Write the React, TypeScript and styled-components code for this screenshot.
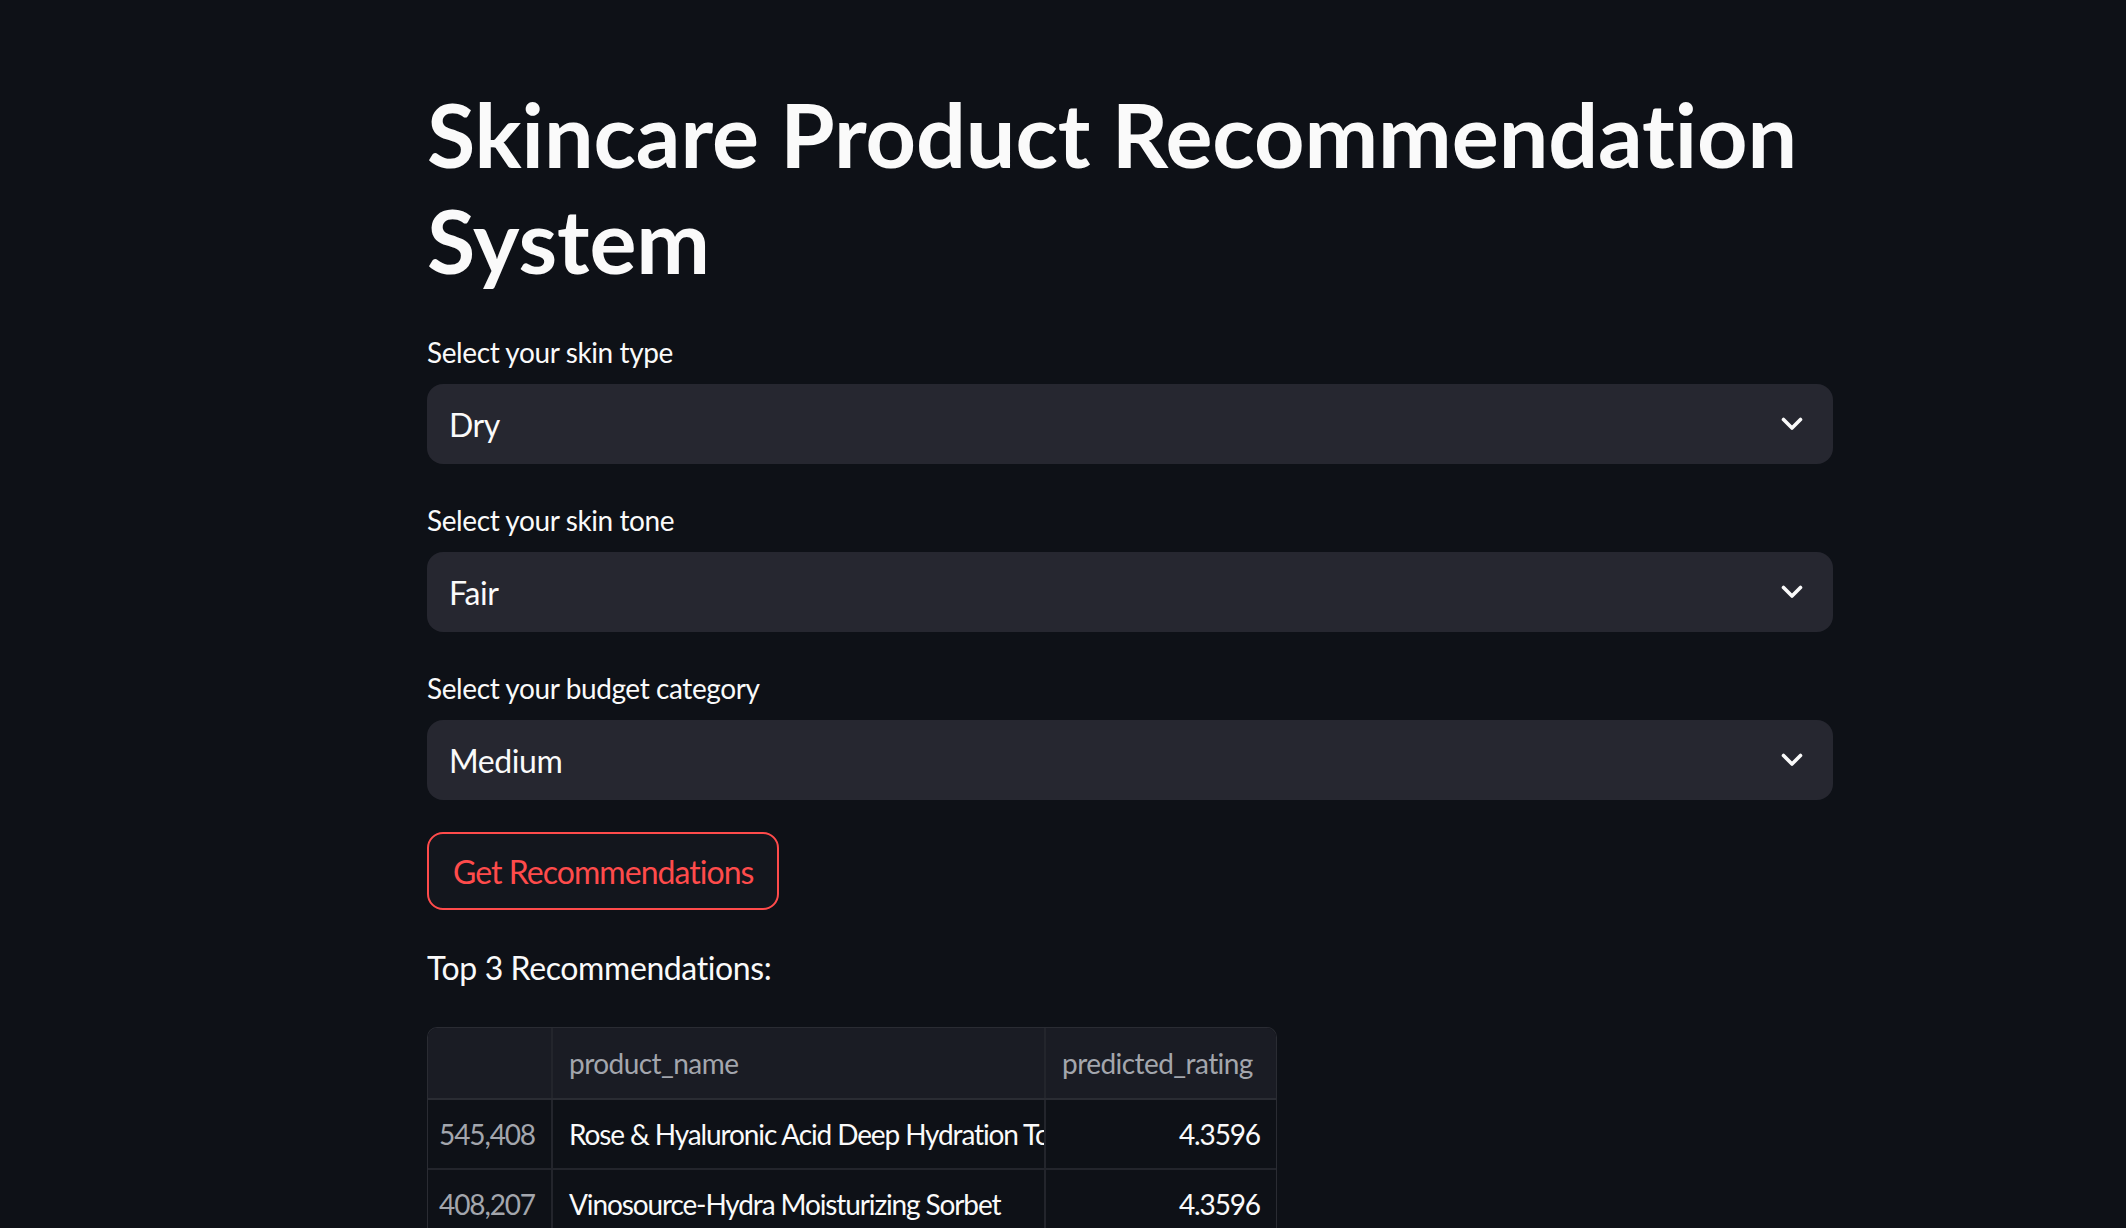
import React from 'react';
import styled, { createGlobalStyle } from 'styled-components';

const GlobalStyle = createGlobalStyle`
  html, body {
    margin: 0;
    padding: 0;
    background: #0e1117;
    color: #fafafa;
    font-family: Lato, "Noto Sans", sans-serif;
    font-variant-ligatures: none;
  }
`;

type Option = { label: string; value: string };

const fields: Option[] = [
  { label: 'Select your skin type', value: 'Dry' },
  { label: 'Select your skin tone', value: 'Fair' },
  { label: 'Select your budget category', value: 'Medium' },
];

const rows = [
  { index: '545,408', name: 'Rose & Hyaluronic Acid Deep Hydration Toner', rating: '4.3596' },
  { index: '408,207', name: 'Vinosource-Hydra Moisturizing Sorbet', rating: '4.3596' },
  { index: '374,112', name: 'Protini Polypeptide Cream', rating: '4.3596' },
];

const Chevron = () => (
  <svg width="22" height="14" viewBox="0 0 22 14" fill="none">
    <path d="M2.5 2.5 11 11 19.5 2.5" stroke="#fafafa" strokeWidth="3.6" strokeLinecap="round" strokeLinejoin="round" />
  </svg>
);

const App = () => {
  return (
    <>
      <GlobalStyle />
      <Page>
        <Main>
          <Title>Skincare Product Recommendation System</Title>
          <Form>
            {fields.map((f) => (
              <Field key={f.label}>
                <Label>{f.label}</Label>
                <SelectBox>
                  <SelectValue>{f.value}</SelectValue>
                  <Chevron />
                </SelectBox>
              </Field>
            ))}
            <ButtonRow>
              <Button>Get Recommendations</Button>
            </ButtonRow>
            <Subhead>Top 3 Recommendations:</Subhead>
          </Form>
          <Table>
            <HeadRow>
              <Cell $col="index" $head />
              <Cell $col="name" $head>product_name</Cell>
              <Cell $col="rating" $head>predicted_rating</Cell>
            </HeadRow>
            {rows.map((r) => (
              <Row key={r.index}>
                <Cell $col="index">{r.index}</Cell>
                <Cell $col="name">{r.name}</Cell>
                <Cell $col="rating">{r.rating}</Cell>
              </Row>
            ))}
          </Table>
        </Main>
      </Page>
    </>
  );
};

export default App;

const Page = styled.div`
  width: 2126px;
  height: 1228px;
  overflow: hidden;
  background: #0e1117;
  letter-spacing: -0.025em;
`;

const Main = styled.main`
  width: 1406px;
  margin-left: 427px;
  padding-top: 82px;
`;

const Title = styled.h1`
  margin: 0 0 35px 0;
  font-size: 88px;
  line-height: 1.2;
  font-weight: 700;
  letter-spacing: -0.05px;
  color: #fafafa;
`;

const Form = styled.div`
  display: flex;
  flex-direction: column;
  gap: 32px;
`;

const Field = styled.div`
  display: flex;
  flex-direction: column;
  gap: 8px;
`;

const Label = styled.label`
  display: flex;
  align-items: center;
  height: 48px;
  font-size: 28px;
  color: #fafafa;
`;

const SelectBox = styled.div`
  display: flex;
  align-items: center;
  justify-content: space-between;
  height: 80px;
  padding: 0 30px 0 22px;
  box-sizing: border-box;
  background: #262730;
  border-radius: 16px;
`;

const SelectValue = styled.span`
  font-size: 32px;
  color: #fafafa;
`;

const ButtonRow = styled.div`
  display: flex;
`;

const Button = styled.button`
  height: 78px;
  padding: 0 24px;
  background: #13161d;
  border: 2px solid #ff4b4b;
  border-radius: 16px;
  color: #ff4b4b;
  font-family: inherit;
  font-size: 32px;
  letter-spacing: -0.03em;
  cursor: pointer;
`;

const Subhead = styled.p`
  margin: 0;
  font-size: 32px;
  line-height: 1.6;
  color: #fafafa;
`;

const Table = styled.div`
  width: 848px;
  margin-top: 34px;
  border: 1px solid #2a2c33;
  border-bottom: none;
  border-radius: 10px 10px 0 0;
  overflow: hidden;
`;

const HeadRow = styled.div`
  display: grid;
  grid-template-columns: 125px 493px 1fr;
  height: 70px;
  background: #1a1c24;
  border-bottom: 2px solid #2a2c33;
`;

const Row = styled.div`
  display: grid;
  grid-template-columns: 125px 493px 1fr;
  height: 68px;
  border-bottom: 2px solid #23252c;
`;

const Cell = styled.div<{ $col: 'index' | 'name' | 'rating'; $head?: boolean }>`
  display: flex;
  align-items: center;
  justify-content: ${({ $col, $head }) => ($head ? 'flex-start' : $col === 'name' ? 'flex-start' : 'flex-end')};
  padding: 0 16px;
  font-size: 28px;
  letter-spacing: ${({ $head }) => ($head ? '-0.02em' : '-0.04em')};
  white-space: nowrap;
  overflow: hidden;
  color: ${({ $col, $head }) => ($head || $col === 'index' ? '#a3a6ad' : '#fafafa')};
  border-right: ${({ $col }) => ($col === 'rating' ? 'none' : '2px solid #23252c')};
`;
